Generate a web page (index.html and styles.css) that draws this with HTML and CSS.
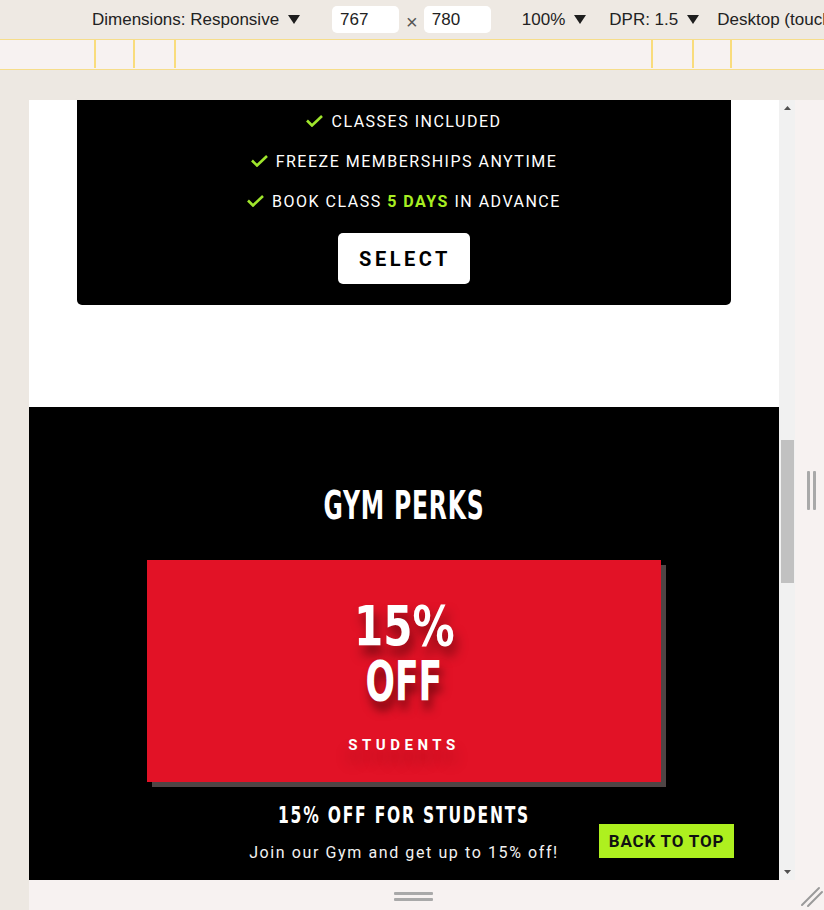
FILE: index.html
```html
<!DOCTYPE html>
<html lang="en">
<head>
<meta charset="utf-8">
<title>Gym</title>
<link rel="stylesheet" href="styles.css">
</head>
<body>
<div class="toolbar">
  <span class="tb-item tb-dim">Dimensions: Responsive<svg class="caret" viewBox="0 0 12 9"><path d="M0 0H12L6 9Z"/></svg></span>
  <span class="tb-input tb-w">767</span>
  <span class="tb-x">×</span>
  <span class="tb-input tb-h">780</span>
  <span class="tb-item tb-zoom">100%<svg class="caret" viewBox="0 0 12 9"><path d="M0 0H12L6 9Z"/></svg></span>
  <span class="tb-item tb-dpr">DPR: 1.5<svg class="caret" viewBox="0 0 12 9"><path d="M0 0H12L6 9Z"/></svg></span>
  <span class="tb-item tb-mode">Desktop (touch)</span>
</div>
<div class="ruler">
  <i class="tick t1"></i><i class="tick t2"></i><i class="tick t3"></i><i class="tick t4"></i><i class="tick t5"></i><i class="tick t6"></i>
</div>
<div class="stage">
  <div class="device">
    <div class="viewport">
      <div class="page">
        <div class="plan-card">
          <ul class="features">
            <li><svg class="check" viewBox="0 0 17 12"><polyline points="1,5.5 6,10.5 16,1"/></svg><span>Classes included</span></li>
            <li><svg class="check" viewBox="0 0 17 12"><polyline points="1,5.5 6,10.5 16,1"/></svg><span>Freeze memberships anytime</span></li>
            <li><svg class="check" viewBox="0 0 17 12"><polyline points="1,5.5 6,10.5 16,1"/></svg><span>Book class <b class="hl">5 days</b> in advance</span></li>
          </ul>
          <a class="select">SELECT</a>
        </div>
        <section class="perks">
          <h2 class="perks-title">GYM PERKS</h2>
          <div class="discount">
            <div class="big"><span class="big-num">15%</span><br><span class="big-off">OFF</span></div>
            <div class="students">STUDENTS</div>
          </div>
          <h3 class="perk-name">15% OFF FOR STUDENTS</h3>
          <p class="perk-text">Join our Gym and get up to 15% off!</p>
        </section>
        <a class="back-top">BACK TO TOP</a>
      </div>
      <div class="scrollbar">
        <div class="sb-arrow"><svg viewBox="0 0 7 4"><path d="M0 4H7L3.5 0Z"/></svg></div>
        <div class="sb-thumb"></div>
        <div class="sb-fill"></div>
        <div class="sb-arrow"><svg viewBox="0 0 7 4"><path d="M0 0H7L3.5 4Z"/></svg></div>
      </div>
    </div>
    <div class="handle-right"><i></i><i></i></div>
    <div class="handle-bottom"><i></i><i></i></div>
    <div class="corner"><svg viewBox="0 0 29 30"><line x1="7" y1="25" x2="24" y2="8"/><line x1="13" y1="26" x2="27" y2="12"/></svg></div>
  </div>
</div>
</body>
</html>
```
FILE: styles.css
```css
* {
  box-sizing: border-box;
  margin: 0;
  padding: 0;
}

body {
  width: 824px;
  height: 910px;
  overflow: hidden;
  background: #ede8e2;
  font-family: "Liberation Sans", Arial, sans-serif;
}

/* ---------- devtools toolbar ---------- */
.toolbar {
  height: 39px;
  display: flex;
  align-items: center;
  padding-left: 92px;
  background: #eee9e3;
  color: #222;
  font-size: 17px;
  white-space: nowrap;
  overflow: hidden;
}

.toolbar > * {
  flex-shrink: 0;
}

.tb-item {
  display: flex;
  align-items: center;
}

.caret {
  width: 12px;
  height: 9px;
  margin-left: 9px;
  fill: #1e1e1e;
}

.tb-input {
  width: 67px;
  height: 27px;
  line-height: 27px;
  padding-left: 8px;
  background: #fff;
  border-radius: 5px;
}

.tb-w { margin-left: 32px; }
.tb-x { margin-left: 7px; font-size: 20px; color: #555; line-height: 1; padding-top: 4px; }
.tb-h { margin-left: 6px; }
.tb-zoom { margin-left: 31px; }
.tb-dpr { margin-left: 23px; }
.tb-mode { margin-left: 18px; }

/* ---------- ruler ---------- */
.ruler {
  height: 31px;
  display: flex;
  padding-left: 94px;
  background: #f7f2f1;
  border-top: 1px solid #f6dd8a;
  border-bottom: 1px solid #f6dd8a;
}

.tick {
  width: 2px;
  height: 28px;
  background: #f9dc7c;
}

.t2 { margin-left: 37px; }
.t3 { margin-left: 39px; }
.t4 { margin-left: 475px; }
.t5 { margin-left: 39px; }
.t6 { margin-left: 36px; }

/* ---------- device frame ---------- */
.stage {
  padding: 30px 0 0 29px;
}

.device {
  display: grid;
  grid-template-columns: 766px 29px;
  grid-template-rows: 780px 30px;
  background: #f7f2f1;
}

.viewport {
  display: flex;
  overflow: hidden;
}

.page {
  position: relative;
  width: 750px;
  height: 780px;
  overflow: hidden;
  background: #fff;
}

.scrollbar {
  width: 16px;
  display: flex;
  flex-direction: column;
  background: #f1f1f1;
}

.sb-arrow {
  height: 16px;
  display: flex;
  align-items: center;
  justify-content: center;
}

.sb-arrow svg {
  width: 7px;
  height: 4px;
  fill: #505050;
}

.sb-thumb {
  margin: 324px 1px 0 2px;
  height: 143px;
  background: #c1c1c1;
}

.sb-fill {
  flex: 1;
}

.handle-right {
  display: flex;
  align-items: center;
  justify-content: center;
  gap: 3px;
  padding-left: 3px;
}

.handle-right i {
  width: 3px;
  height: 39px;
  border-radius: 1px;
  background: #a9a9a9;
}

.handle-bottom {
  display: flex;
  flex-direction: column;
  align-items: center;
  justify-content: center;
  gap: 3px;
  padding: 3px 0 0 3px;
}

.handle-bottom i {
  width: 39px;
  height: 3px;
  border-radius: 1px;
  background: #a9a9a9;
}

.corner svg {
  display: block;
  width: 29px;
  height: 30px;
  stroke: #9a9a9a;
  stroke-width: 2;
  stroke-linecap: round;
}

/* ---------- page content ---------- */
.plan-card {
  margin: 0 48px;
  padding: 1px 0 21px;
  display: flex;
  flex-direction: column;
  align-items: center;
  background: #000;
  border-radius: 0 0 5px 5px;
}

.features {
  list-style: none;
}

.features li {
  height: 40px;
  display: flex;
  align-items: center;
  justify-content: center;
  gap: 8px;
  color: #fff;
  font-family: Roboto, "Liberation Sans", sans-serif;
  font-size: 16px;
  letter-spacing: 1.5px;
  text-transform: uppercase;
}

.check {
  width: 17px;
  height: 12px;
  fill: none;
  stroke: #9fe52c;
  stroke-width: 2.6;
}

.hl {
  color: #a8ee22;
  font-weight: 700;
}

.select {
  margin-top: 12px;
  height: 51px;
  display: flex;
  align-items: center;
  padding: 0 19px 0 21px;
  background: #fff;
  border-radius: 5px;
  color: #000;
  font-family: Roboto, "Liberation Sans", sans-serif;
  font-weight: 700;
  font-size: 20px;
  letter-spacing: 3.5px;
}

.perks {
  margin-top: 102px;
  padding: 75px 0 120px;
  background: #000;
  color: #fff;
  text-align: center;
}

.perks-title,
.big,
.perk-name {
  font-family: "DejaVu Sans Condensed", "DejaVu Sans", sans-serif;
  font-weight: 700;
}

.perks-title {
  font-size: 39px;
  line-height: 47px;
  letter-spacing: 1.2px;
  transform: scaleX(0.67);
}

.discount {
  width: 514px;
  height: 222px;
  margin: 31px auto 0;
  padding-top: 39px;
  display: flex;
  flex-direction: column;
  background: #e21226;
  box-shadow: 5px 5px 0 #4f4545;
}

.big {
  font-size: 55px;
  line-height: 55px;
  text-shadow: 4px 9px 12px rgba(40, 0, 0, 0.55);
}

.big-num,
.big-off {
  display: inline-block;
}

.big-num {
  transform: scaleX(0.85);
}

.big-off {
  transform: scaleX(0.7);
}

.students {
  margin-top: 26px;
  font-family: Roboto, "Liberation Sans", sans-serif;
  font-weight: 700;
  font-size: 15px;
  line-height: 20px;
  letter-spacing: 4.5px;
  text-shadow: 0 12px 14px rgba(60, 0, 0, 0.35);
}

.perk-name {
  margin-top: 19px;
  font-size: 23px;
  line-height: 28px;
  letter-spacing: 2.4px;
  transform: scaleX(0.75);
}

.perk-text {
  margin-top: 12px;
  font-family: Roboto, "Liberation Sans", sans-serif;
  font-size: 16px;
  line-height: 24px;
  letter-spacing: 1.6px;
  color: #f2f2f2;
}

.back-top {
  position: absolute;
  right: 45px;
  bottom: 22px;
  width: 135px;
  height: 34px;
  display: flex;
  align-items: center;
  justify-content: center;
  background: #aef01f;
  color: #111;
  font-family: Roboto, "Liberation Sans", sans-serif;
  font-weight: 700;
  font-size: 17px;
  letter-spacing: 0.8px;
}
```
